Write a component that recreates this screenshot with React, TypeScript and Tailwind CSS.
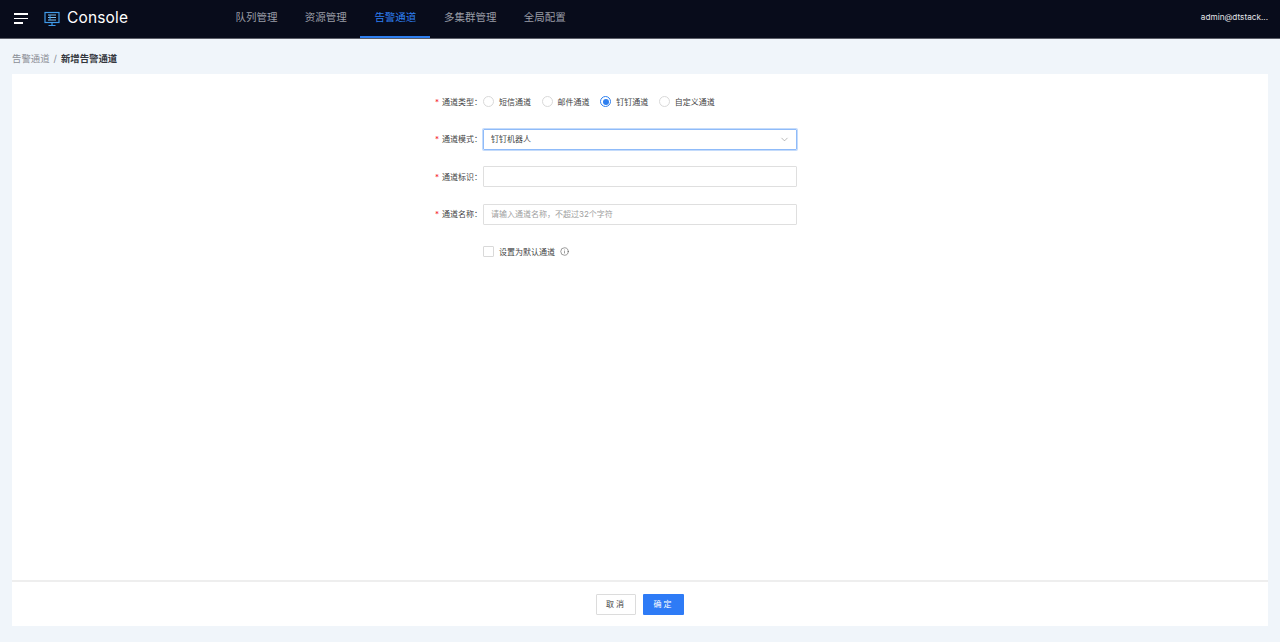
import { ChevronDown, Info } from 'lucide-react';

const font = { fontFamily: '"Inter", "Noto Sans CJK SC", sans-serif' };

const navItems = ['队列管理', '资源管理', '告警通道', '多集群管理', '全局配置'];
const channelTypes = ['短信通道', '邮件通道', '钉钉通道', '自定义通道'];

function FormRow({ label, children }: { label: string; children: React.ReactNode }) {
  return (
    <div className="flex items-center h-[21px]">
      <label className="w-[49px] shrink-0 pr-[1px] flex justify-end items-center text-[8px] text-[#3f3f44] whitespace-nowrap">
        <span className="text-[#f5222d] mr-[3px]">*</span>
        {label}：
      </label>
      <div className="flex-1 min-w-0">{children}</div>
    </div>
  );
}

export default function App() {
  return (
    <div style={font} className="w-[1280px] h-[642px] overflow-hidden bg-[#f0f5fa] flex flex-col">
      <header className="h-[39px] shrink-0 bg-[#080c1b] border-b border-b-[#5b5e68] flex items-center">
        <div className="w-[14px] ml-[14px] mb-[1px] flex flex-col gap-[3px]">
          <span className="block h-[1.5px] w-[14px] bg-white" />
          <span className="block h-[1.5px] w-[14px] bg-white" />
          <span className="block h-[1.5px] w-[9px] bg-white" />
        </div>
        <svg className="ml-[16px] mb-[1px]" width="16" height="16" viewBox="0 0 16 16" fill="none">
          <rect x="1" y="1.5" width="14" height="10" stroke="#3f9bea" strokeWidth="1.2" />
          <path d="M4 4h8M4 6.5h8M4 9h8" stroke="#7cc1f5" strokeWidth="1" />
          <path d="M6 4v5" stroke="#3f9bea" strokeWidth="1" />
          <path d="M8 11.5v2.5M4.5 14.5h7" stroke="#3f9bea" strokeWidth="1.2" />
        </svg>
        <span className="ml-[7px] w-[61px] mb-[2px] text-[15.5px] tracking-[0.15px] text-white whitespace-nowrap">Console</span>
        <nav className="ml-[94px] flex h-full">
          {navItems.map((item) => {
            const active = item === '告警通道';
            return (
              <a
                key={item}
                className={
                  active
                    ? 'h-[38px] px-[14px] pb-[1px] flex items-center text-[10.5px] text-[#2e7ff0] border-b-[2.5px] border-b-[#2e7ff0]'
                    : 'h-[38px] px-[13.6px] pb-[3px] flex items-center text-[10.5px] text-[#9a9da6]'
                }
              >
                {item}
              </a>
            );
          })}
        </nav>
        <span className="ml-auto mr-[12px] mb-[3px] text-[8.2px] text-[#e4e5e8]">admin@dtstack...</span>
      </header>

      <div className="h-[35px] shrink-0 flex items-center px-[12px] pt-[6px] text-[9.4px]">
        <span className="text-[#8b8e96]">告警通道</span>
        <span className="mx-[4px] text-[#8b8e96]">/</span>
        <span className="font-semibold text-[#33363c]">新增告警通道</span>
      </div>

      <main className="mx-[12px] h-[552px] bg-white flex flex-col">
        <div className="flex-1 pt-[17px] pl-[422px]">
          <div className="w-[363px] flex flex-col gap-[16.5px]">
            <FormRow label="通道类型">
              <div className="flex items-center gap-[10px]">
                {channelTypes.map((type) => {
                  const checked = type === '钉钉通道';
                  return (
                    <label key={type} className="flex items-center text-[8px] text-[#3f3f44]">
                      <span
                        className={
                          checked
                            ? 'w-[11px] h-[11px] rounded-full border border-[#2e7ff0] flex items-center justify-center'
                            : 'w-[11px] h-[11px] rounded-full border border-[#d9d9d9]'
                        }
                      >
                        {checked && <span className="w-[6px] h-[6px] rounded-full bg-[#2e7ff0]" />}
                      </span>
                      <span className="ml-[5px] pr-[0.6px]">{type}</span>
                    </label>
                  );
                })}
              </div>
            </FormRow>
            <FormRow label="通道模式">
              <div className="h-[21px] border border-[#8fbbf9] shadow-[0_0_0_1px_#c4dbfb] rounded-[1px] flex items-center justify-between pl-[7px] pr-[6px] text-[8px] text-[#3f3f44]">
                钉钉机器人
                <ChevronDown size={11} strokeWidth={1.3} className="text-[#8a8a8a]" />
              </div>
            </FormRow>
            <FormRow label="通道标识">
              <div className="h-[21px] border border-[#dfdfdf] rounded-[1px]" />
            </FormRow>
            <FormRow label="通道名称">
              <div className="h-[21px] border border-[#dfdfdf] rounded-[1px] flex items-center pl-[7px] text-[8px] text-[#a0a0a0]">
                请输入通道名称，不超过32个字符
              </div>
            </FormRow>
            <div className="h-[21px] flex items-center pl-[49px]">
              <span className="w-[11px] h-[11px] border border-[#d9d9d9] rounded-[1px]" />
              <span className="ml-[5px] text-[8px] text-[#3f3f44]">设置为默认通道</span>
              <Info size={9} strokeWidth={1.3} className="ml-[5px] text-[#333]" />
            </div>
          </div>
        </div>
        <footer className="h-[46px] shrink-0 border-t-2 border-t-[#eeeeee] flex items-center justify-center gap-[7px]">
          <button className="w-[40px] h-[21px] border border-[#dcdcdc] rounded-[1px] bg-white text-[8px] tracking-[2px] text-[#444]">
            取消
          </button>
          <button className="w-[41px] h-[21px] rounded-[1px] bg-[#2e7bf6] text-[8px] tracking-[2px] text-white">
            确定
          </button>
        </footer>
      </main>
    </div>
  );
}
